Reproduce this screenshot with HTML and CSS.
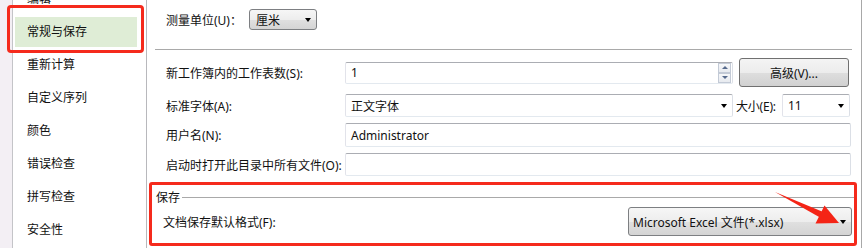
FILE: index.html
```html
<!DOCTYPE html>
<html lang="zh-CN">
<head>
<meta charset="utf-8">
<title>Excel 选项</title>
<link rel="stylesheet" href="styles.css">
</head>
<body>
<div class="app">
  <div class="edge"></div>
  <nav class="nav">
    <div class="list">
      <div class="item"><span>编辑</span></div>
      <div class="item sel"><span>常规与保存</span></div>
      <div class="item"><span>重新计算</span></div>
      <div class="item"><span>自定义序列</span></div>
      <div class="item"><span>颜色</span></div>
      <div class="item"><span>错误检查</span></div>
      <div class="item"><span>拼写检查</span></div>
      <div class="item"><span>安全性</span></div>
    </div>
  </nav>
  <main class="main">
    <div class="unit-row">
      <span class="unit-label">测量单位(U)：</span>
      <div class="dd unit-dd"><span>厘米</span><i class="tri"></i></div>
    </div>
    <div class="sep"></div>
    <div class="row r1">
      <span class="lab">新工作簿内的工作表数(S):</span>
      <div class="field w388 f22"><span>1</span>
        <div class="spin"><b class="sb up"><i></i></b><b class="sb down"><i></i></b></div>
      </div>
      <div class="btn">高级(V)...</div>
    </div>
    <div class="row r2">
      <span class="lab">标准字体(A):</span>
      <div class="field w388 f23"><span>正文字体</span><i class="tri"></i></div>
      <span class="size-lab">大小(E):</span>
      <div class="field w68 f23"><span>11</span><i class="tri"></i></div>
    </div>
    <div class="row r3">
      <span class="lab">用户名(N):</span>
      <div class="field w506 f24"><span>Administrator</span></div>
    </div>
    <div class="row r4">
      <span class="lab">启动时打开此目录中所有文件(O):</span>
      <div class="field w506 f23"><span></span></div>
    </div>
    <section class="group">
      <div class="group-head"><span>保存</span><div class="group-line"></div></div>
      <div class="group-row">
        <span class="glab">文档保存默认格式(F):</span>
        <div class="dd fmt-dd"><span>Microsoft Excel 文件(*.xlsx)</span><i class="tri"></i></div>
      </div>
    </section>
  </main>
</div>
<div class="mark mark-nav"></div>
<div class="mark mark-save"></div>
<svg class="arrow" width="864" height="248" viewBox="0 0 864 248">
  <polygon points="775,192 822,211.5 820,217.5" fill="#f42416"/>
  <polygon points="839,223 824.5,205.5 815.5,223.5" fill="#f42416"/>
</svg>
</body>
</html>
```

FILE: styles.css
```css
* { box-sizing: border-box; }
html, body { margin: 0; padding: 0; }
body {
  width: 864px;
  height: 248px;
  overflow: hidden;
  background: #ffffff;
  font-family: "Noto Sans", "Noto Sans CJK SC", sans-serif;
  font-size: 12px;
  color: #111;
  position: relative;
  white-space: nowrap;
}
.app {
  display: flex;
  height: 248px;
}
.edge {
  width: 12px;
  background: #f3eff4;
}
.nav {
  width: 135px;
  border-left: 1px solid #c4c4c8;
  border-right: 1px solid #b8b8bc;
  overflow: hidden;
  background: #fff;
}
.list {
  margin-top: -18px;
  padding: 0 9px 0 2px;
}
.item {
  height: 33px;
  padding: 1.5px 0;
}
.item span {
  display: flex;
  align-items: center;
  height: 30px;
  padding-left: 12px;
  line-height: 1;
}
.item.sel span { background: #dfedd6; }

.main {
  flex: 1;
  margin-right: 2px;
  border-right: 1px solid #a8a8a8;
  display: flex;
  flex-direction: column;
}
.unit-row {
  display: flex;
  align-items: center;
  padding-left: 19px;
  margin-top: 9px;
  height: 21px;
}
.unit-label { width: 83px; flex-shrink: 0; }
.dd {
  display: flex;
  align-items: center;
  border: 1px solid #7d7f82;
  border-radius: 3px;
  background: linear-gradient(#f6f6f6 0%, #ededed 50%, #e0e0e0 51%, #d4d4d4 100%);
  padding-left: 6px;
  position: relative;
  flex-shrink: 0;
}
.dd span { flex: 1; }
.unit-dd { width: 68px; height: 21px; }
.tri {
  width: 0;
  height: 0;
  border-left: 3.5px solid transparent;
  border-right: 3.5px solid transparent;
  border-top: 4px solid #000;
  margin-right: 5px;
}
.sep {
  margin: 19px 0 0 8px;
  width: 697px;
  height: 1px;
  background: #a9a9a9;
}
.row {
  display: flex;
  align-items: center;
  padding-left: 19px;
}
.lab { width: 179px; flex-shrink: 0; }
.r1 { margin-top: 8px; height: 29px; }
.r2 { margin-top: 7px; height: 23px; }
.r3 { margin-top: 6px; height: 24px; }
.r4 { margin-top: 6px; height: 23px; }
.field {
  display: flex;
  align-items: center;
  background: #fff;
  border: 1px solid;
  border-color: #abadb3 #dbdfe6 #e3e9ef #e2e3ea;
  border-radius: 2px;
  padding-left: 5px;
  flex-shrink: 0;
}
.field span { flex: 1; }
.w388 { width: 388px; }
.w68 { width: 68px; }
.w506 { width: 506px; }
.f22 { height: 22px; }
.f23 { height: 23px; }
.f24 { height: 24px; }
.spin {
  display: flex;
  flex-direction: column;
  margin-right: 1px;
}
.sb {
  width: 13px;
  height: 10px;
  border: 1px solid #c3cad6;
  background: linear-gradient(#f6f7f9, #e7eaef);
  display: flex;
  align-items: center;
  justify-content: center;
}
.sb i {
  width: 0;
  height: 0;
  border-left: 3px solid transparent;
  border-right: 3px solid transparent;
}
.up i { border-bottom: 3px solid #566a8c; }
.down i { border-top: 3px solid #566a8c; }
.btn {
  width: 110px;
  height: 29px;
  margin-left: 6px;
  flex-shrink: 0;
  display: flex;
  align-items: center;
  justify-content: center;
  border: 1px solid #707070;
  border-radius: 3px;
  background: linear-gradient(#f4f4f4 0%, #ececec 50%, #dedede 51%, #d1d1d1 100%);
}
.size-lab {
  width: 49px;
  flex-shrink: 0;
  padding-left: 3px;
  letter-spacing: -0.2px;
}
.group {
  margin-top: 12px;
  display: flex;
  flex-direction: column;
}
.group-head {
  display: flex;
  align-items: center;
  height: 18px;
  padding-left: 9px;
}
.group-line {
  flex: 1;
  height: 1px;
  background: #a9a9a9;
  margin: 0 6px 0 2px;
}
.group-row {
  display: flex;
  align-items: center;
  height: 29px;
  margin-top: 1px;
  padding-left: 16px;
}
.glab { width: 465px; flex-shrink: 0; }
.fmt-dd { width: 224px; height: 29px; padding-left: 4px; }

.mark {
  position: absolute;
  border: 3px solid #f52a1c;
  border-radius: 4px;
  pointer-events: none;
}
.mark-nav { left: 7px; top: 5px; width: 137px; height: 48px; }
.mark-save { left: 149px; top: 182px; width: 708px; height: 64px; border-radius: 3px; }
.arrow {
  position: absolute;
  left: 0;
  top: 0;
  pointer-events: none;
}
```
